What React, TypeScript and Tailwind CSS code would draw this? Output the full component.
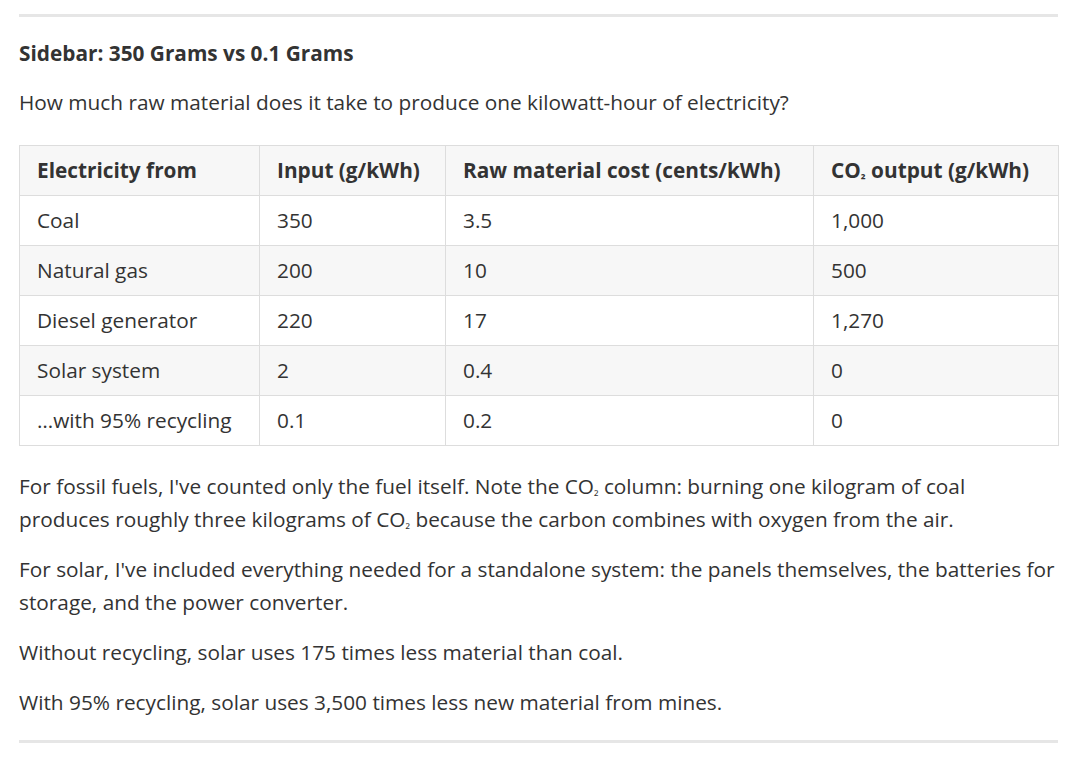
const Sub2 = () => <span className="text-[0.62em] leading-[0]">₂</span>;

const rows = [
  ['Coal', '350', '3.5', '1,000'],
  ['Natural gas', '200', '10', '500'],
  ['Diesel generator', '220', '17', '1,270'],
  ['Solar system', '2', '0.4', '0'],
  ['…with 95% recycling', '0.1', '0.2', '0'],
];

const headers: React.ReactNode[] = [
  'Electricity from',
  'Input (g/kWh)',
  'Raw material cost (cents/kWh)',
  <>
    CO<Sub2 /> output (g/kWh)
  </>,
];
const widths = ['w-[240px]', 'w-[186px]', 'w-[368px]', 'w-[245px]'];

export default function App() {
  return (
    <div className="min-h-[757px] bg-white text-[#333333] font-['Open_Sans',sans-serif]">
      <div className="ml-[19px] w-[1039px] pt-[14px]">
        <div className="h-[3px] bg-[#e6e6e6]" />

        <h3 className="mt-[20px] text-[20.8px] leading-[33px] font-bold">Sidebar: 350 Grams vs 0.1 Grams</h3>
        <p className="mt-[16px] text-[20.8px] leading-[33px]">
          How much raw material does it take to produce one kilowatt-hour of electricity?
        </p>

        <table className="mt-[26px] w-full border-collapse text-[20.8px] table-fixed">
          <thead>
            <tr className="bg-[#f7f7f7] h-[50px]">
              {headers.map((h, i) => (
                <th key={i} className={`${widths[i]} border border-[#dddddd] px-[17px] text-left font-bold`}>
                  {h}
                </th>
              ))}
            </tr>
          </thead>
          <tbody>
            {rows.map((r, ri) => (
              <tr key={ri} className={`h-[50px] ${ri % 2 === 1 ? 'bg-[#f7f7f7]' : 'bg-white'}`}>
                {r.map((c, ci) => (
                  <td key={ci} className="border border-[#dddddd] px-[17px]">
                    {c}
                  </td>
                ))}
              </tr>
            ))}
          </tbody>
        </table>

        <div className="mt-[24px] text-[20.8px] leading-[33px] space-y-[17px]">
          <p>
            For fossil fuels, I've counted only the fuel itself. Note the CO<Sub2 /> column: burning one kilogram of coal
            produces roughly three kilograms of CO<Sub2 /> because the carbon combines with oxygen from the air.
          </p>
          <p>
            For solar, I've included everything needed for a standalone system: the panels themselves, the batteries for
            storage, and the power converter.
          </p>
          <p>Without recycling, solar uses 175 times less material than coal.</p>
          <p>With 95% recycling, solar uses 3,500 times less new material from mines.</p>
        </div>

        <div className="mt-[21px] h-[3px] bg-[#e6e6e6]" />
      </div>
    </div>
  );
}
